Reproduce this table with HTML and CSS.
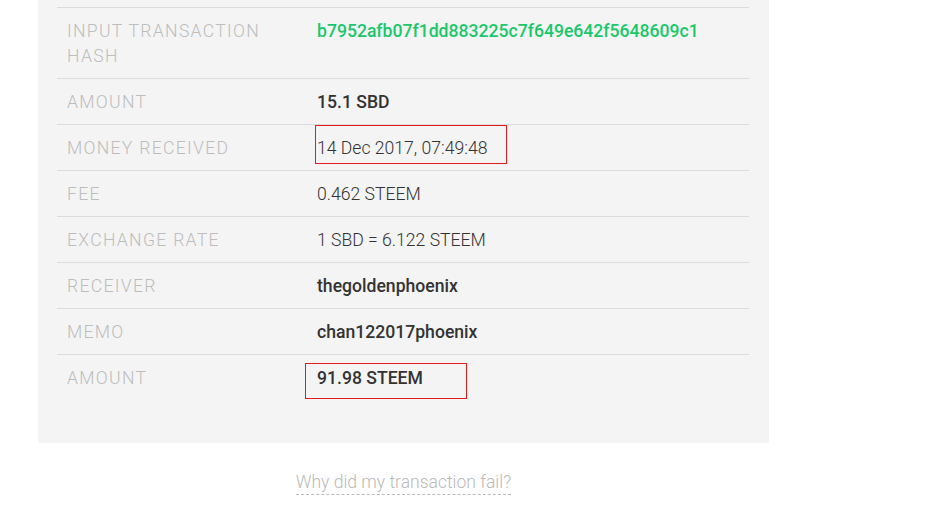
FILE: index.html
```html
<!DOCTYPE html>
<html>
<head>
<meta charset="utf-8">
<link rel="stylesheet" href="styles.css">
</head>
<body>
<div class="page">
  <div class="panel">
    <div class="table">
      <div class="row">
        <div class="label">Input transaction hash</div>
        <div class="value hash">b7952afb07f1dd883225c7f649e642f5648609c1</div>
      </div>
      <div class="row">
        <div class="label">Amount</div>
        <div class="value bold">15.1 SBD</div>
      </div>
      <div class="row">
        <div class="label">Money received</div>
        <div class="value"><span class="mark mark-date"></span>14 Dec 2017, 07:49:48</div>
      </div>
      <div class="row">
        <div class="label">Fee</div>
        <div class="value">0.462 STEEM</div>
      </div>
      <div class="row">
        <div class="label">Exchange rate</div>
        <div class="value">1 SBD = 6.122 STEEM</div>
      </div>
      <div class="row">
        <div class="label">Receiver</div>
        <div class="value bold">thegoldenphoenix</div>
      </div>
      <div class="row">
        <div class="label">Memo</div>
        <div class="value bold">chan122017phoenix</div>
      </div>
      <div class="row last">
        <div class="label">Amount</div>
        <div class="value bold"><span class="mark mark-amount"></span>91.98 STEEM</div>
      </div>
    </div>
  </div>
  <div class="footer">
    <a class="fail-link" href="#">Why did my transaction fail?</a>
  </div>
</div>
</body>
</html>
```

FILE: styles.css
```css
html, body {
  margin: 0;
  padding: 0;
  background: #ffffff;
}

body {
  font-family: Roboto, "Liberation Sans", sans-serif;
  color: #333333;
}

.page {
  width: 731px;
  margin-left: 38px;
}

.panel {
  background: #f4f4f4;
  padding: 7px 20px 43px 19px;
}

.table {
  display: flex;
  flex-direction: column;
}

.row {
  display: grid;
  grid-template-columns: 260px 1fr;
  border-top: 1px solid #dcdcdc;
  padding: 11px 0 9px;
  font-size: 17.6px;
  line-height: 25px;
}

.label {
  padding-left: 10px;
  text-transform: uppercase;
  letter-spacing: 1.3px;
  font-weight: 300;
  color: #bdbdbd;
  padding-right: 40px;
}

.value {
  position: relative;
  font-weight: 300;
  color: #333333;
}

.value.bold {
  font-weight: 500;
}

.value.hash {
  font-weight: 500;
  color: #1ac86b;
}

.mark {
  position: absolute;
  border: 1px solid #e31b1b;
  box-sizing: border-box;
}

.mark-date {
  left: -2px;
  top: -11px;
  width: 192px;
  height: 39px;
}

.mark-amount {
  left: -12px;
  top: -3px;
  width: 162px;
  height: 36px;
}

.footer {
  display: flex;
  justify-content: center;
  padding-top: 27px;
}

.fail-link {
  font-size: 17.5px;
  font-weight: 300;
  line-height: 24px;
  color: #b9b9b9;
  text-decoration: none;
  border-bottom: 1px dashed #b9b9b9;
}
```
